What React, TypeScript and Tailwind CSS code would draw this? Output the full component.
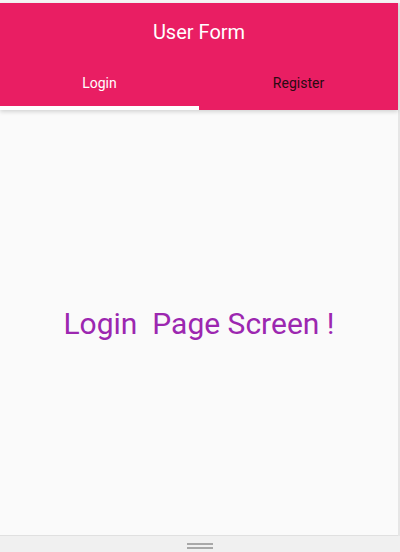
export default function App() {
  return (
    <div className="w-[400px] h-[552px] flex flex-col bg-[#f0f0f0]" style={{ fontFamily: "Roboto, 'Liberation Sans', sans-serif" }}>
      <div className="h-[3px] bg-[#f5f5f5]" />
      <div className="flex-1 flex flex-col w-[398px] border-r-2 border-[#e6e6e6] box-content mr-0">
        <div className="bg-[#e91e63] flex flex-col shadow-[0_2px_4px_rgba(0,0,0,0.15)] z-10">
          <div className="h-[58px] flex items-center justify-center text-white text-[20px]">User Form</div>
          <div className="flex h-[49px]">
            <div className="flex-1 flex flex-col">
              <div className="flex-1 flex items-center justify-center text-white text-[14px]">Login</div>
              <div className="h-[4px] w-[199px] bg-white" />
            </div>
            <div className="flex-1 flex flex-col">
              <div className="flex-1 flex items-center justify-center text-[#2a0a12] text-[14px]">Register</div>
              <div className="h-[4px]" />
            </div>
          </div>
        </div>
        <div className="flex-1 bg-[#fafafa] flex items-center justify-center border-b border-[#e0e0e0]">
          <div className="text-[#9c27b0] text-[30px] whitespace-pre pt-[1px]">Login  Page Screen !</div>
        </div>
      </div>
      <div className="h-[16px] flex flex-col items-center pt-[7px] gap-[2px] bg-[#f0f0f0]">
        <div className="w-[26px] h-[2px] bg-[#a8a8a8]" />
        <div className="w-[26px] h-[2px] bg-[#a8a8a8]" />
      </div>
    </div>
  );
}
